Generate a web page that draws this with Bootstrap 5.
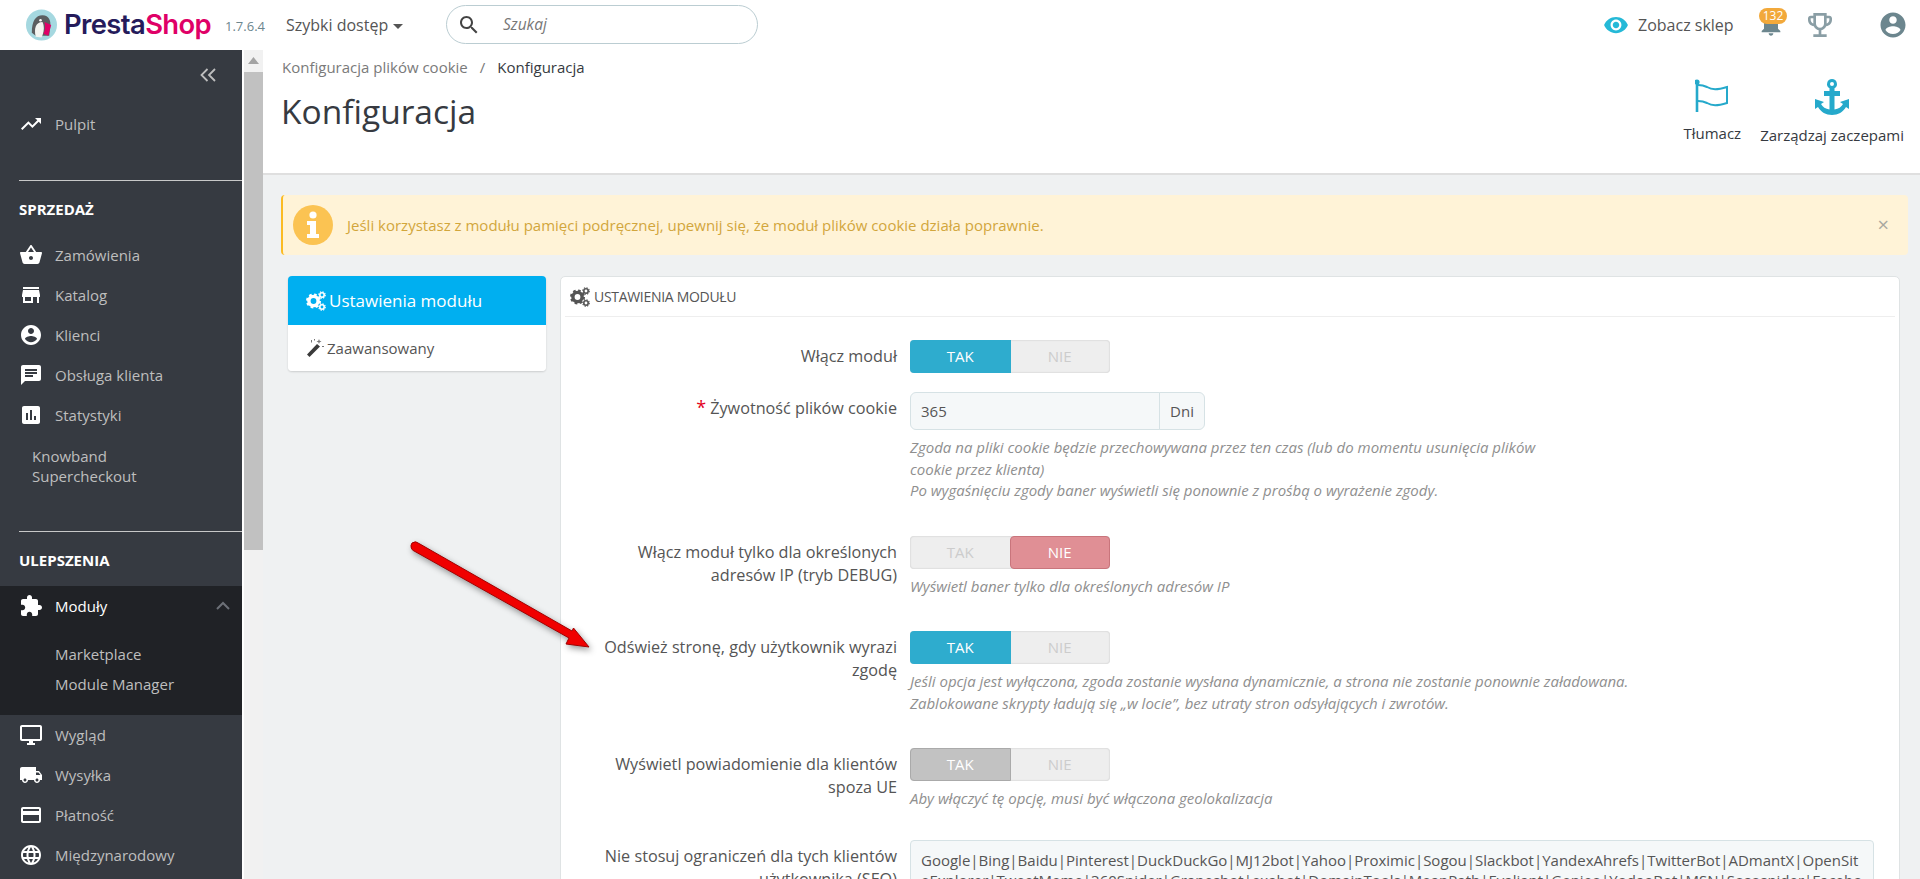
<!DOCTYPE html>
<html lang="pl">
<head>
<meta charset="utf-8">
<title>Konfiguracja</title>
<link href="https://cdn.jsdelivr.net/npm/bootstrap@5.3.0/dist/css/bootstrap.min.css" rel="stylesheet">
<style>
html,body{height:879px;overflow:hidden}
body{font-family:"Open Sans",sans-serif;font-size:15px;color:#555;background:#eff1f2}
svg{fill:currentColor;display:block;flex:none}
.top-bar{height:50px;background:#fff;padding:0;flex-wrap:nowrap}
.logo-mark{margin-left:26px;width:31px;height:32px}
.logo-word{font-family:Inter,sans-serif;font-weight:600;font-size:27.4px;letter-spacing:-.6px;color:#251b5b;margin-left:7px;line-height:1;width:147px;white-space:nowrap}
.logo-word span{color:#df0067}
.ver{font-size:13px;color:#6c868e;margin-left:14px;margin-top:4px;width:39px;white-space:nowrap}
.quick{font-size:16px;color:#555;margin-left:22px;width:122px;white-space:nowrap}
.quick i{display:inline-block;border:5px solid transparent;border-top-color:#555;border-bottom:0;margin-left:5px;vertical-align:2px}
.search-pill{margin-left:38px;margin-top:-1px;width:312px;height:39px;border:1px solid #bbcdd2;border-radius:20px;color:#444}
.search-pill svg{margin-left:10px}
.search-pill span{font-style:italic;color:#777;margin-left:22px;font-size:15.5px}
.top-right{margin-left:auto;height:50px}
.eye{color:#25b9d7}
.view-shop{font-size:16px;color:#555;margin-left:9px;width:124px;white-space:nowrap}
.bell-box{width:42px;height:50px;color:#6c868e}
.bell-svg{left:-5px;top:10px}
.bell-badge{left:-3px;top:8px;width:28px;height:16px;border-radius:8px;background:#f2a93b;color:#fff;font-size:12px;line-height:16px;text-align:center}
.trophy{color:#8a9ea5;margin-right:42px}
.avatar{color:#6c868e;margin-right:12px}
.side-nav{width:242px;background:#363a41;height:829px;flex:none}
.toggle-row{height:54px;color:#bebebe;padding:0 26px 0 0}
.side-link{height:40px;padding-left:19px;color:#bebebe;text-decoration:none;font-size:15px}
.side-link svg{color:#fff;width:24px;height:24px;margin-right:12px}
.side-link.plain{height:auto;padding:11px 40px 0 32px;line-height:20px;display:block}
.side-rule{margin:0 0 0 19px;border:0;border-top:1px solid #c8c8c8;opacity:1;height:0}
.rule-a{margin-top:36px}
.rule-b{margin-top:45px}
.side-head{height:46px;padding-left:19px;margin-top:5px;margin-bottom:3px;color:#fff;font-weight:700;font-size:15px;text-transform:uppercase}
.side-open{background:#202226;height:129px}
.side-open .side-link{color:#fff}
.side-sub{display:flex;align-items:center;height:30px;padding-left:55px;color:#bebebe;text-decoration:none}
.sub-list{padding:13px 0 16px}
.scroll-track{width:21px;background:#f1f1f1;flex:none;border-left:2px solid #fff}
.scroll-up{height:22px;color:#a3a3a3;padding-top:7px}
.scroll-thumb{height:478px;background:#c1c1c1}
.page-area{min-width:0}
.page-head{height:125px;background:#fff;border-bottom:2px solid #dfdfdf;padding:0 16px 0 19px}
.crumbs{margin:0;padding-top:7px;font-size:15px;line-height:20px;--bs-breadcrumb-divider-color:#777;--bs-breadcrumb-item-padding-x:12px}
.crumbs a{color:#7a7a7a;text-decoration:none}
.crumbs .active{color:#363a41}
.page-title{font-size:33.5px;font-weight:400;color:#363a41;margin:12px 0 0 -1px;line-height:44px}
.tool-btn{color:#363a41;font-size:15px;text-decoration:none;padding-top:29px;white-space:nowrap}
.tool-btn svg{color:#25a9cb;margin:0 auto 9px}
.tool-one{margin-right:19px}
.note-box{margin:20px 12px 0 18px;height:60px;padding:0 19px 0 10px;background:#fff3d7;border:0;border-left:2px solid #fbbb22;border-radius:4px;color:#d2a63c;font-size:15px}
.note-ico{width:40px;height:40px;background:#fbc352;border-radius:50%;color:#fff;margin-right:14px}
.note-close{margin-left:auto;color:#a8a8a0;font-size:20px;line-height:1}
.work-row{margin:21px 0 0 25px}
.tab-col{width:258px;flex:none;margin-right:14px}
.tab-list{border-radius:4px;box-shadow:0 1px 2px rgba(0,0,0,.15)}
.tab-list .list-group-item{border:0;padding:0 18px;display:flex;align-items:center;color:#555;font-size:15px}
.tab-list .list-group-item.active{background:#00aff0;color:#fff;height:49px;font-size:17px;white-space:nowrap}
.tab-list .list-group-item.second{height:46px}
.tab-list svg{margin-right:3px}
.mod-panel{width:1340px;border:1px solid #dfe3e4;border-radius:5px;background:#fff;height:700px}
.mod-head{margin:0 4px;height:40px;background:#fff;border-bottom:1px solid #eee;padding:0 5px;font-size:14px;letter-spacing:-.3px;color:#555;border-radius:0;text-transform:uppercase}
.mod-head svg{margin-right:4px}
.mod-body{padding:23px 0 0 36px}
.set-row{display:flex;margin-bottom:34px}
.set-row.tight{margin-bottom:19px}
.set-row.before-seo{margin-bottom:30px}
.set-label{width:300px;flex:none;margin-right:13px;text-align:right;line-height:23px;padding-top:5px;color:#555;font-size:16.2px}
.set-label b{color:#e3001b;font-weight:400;font-size:18px;line-height:0}
.set-ctl{min-width:0}
.flip{width:200px;height:33px;border-radius:4px;background:#eee;box-shadow:inset 0 0 2px rgba(0,0,0,.2)}
.flip .btn{width:100px;padding:0;height:33px;border:0;border-radius:0;font-size:15px;color:#ccc;line-height:33px;background:transparent}
.flip .btn.on-blue{background:#2eacce;color:#fff;border-radius:4px}
.flip .btn.on-red{background:#e08f95;color:#fff;border:1px solid #c9757c;border-radius:4px;line-height:31px}
.flip .btn.on-gray{background:#c2c2c2;color:#fff;border:1px solid #aaa;border-radius:4px;line-height:31px}
.days{width:295px;height:38px}
.days .form-control{background:#f5f8f9;border-color:#d6e2e5;color:#555;font-size:15px;padding:0 10px;height:38px;box-shadow:none}
.days .input-group-text{background:#f5f8f9;border-color:#d6e2e5;color:#555;font-size:15px;padding:0;width:46px;justify-content:center}
.hint{width:660px;font-style:italic;color:#8f8f8f;font-size:15px;line-height:21.5px;margin:7px 0 0}
.hint.wide{width:840px}
.seo-box.form-control{width:964px;height:120px;background:#f5f8f9;border-color:#d6e2e5;color:#555;font-size:15px;line-height:20px;padding:9px 10px;word-break:break-all;overflow:hidden;resize:none;box-shadow:none;border-radius:4px}
.pointer-arrow{position:absolute;left:405px;top:535px;filter:drop-shadow(2px 3px 3px rgba(0,0,0,.4));z-index:5}
</style>
</head>
<body class="position-relative">
<svg width="0" height="0" class="position-absolute">
<symbol id="gears" viewBox="0 0 20 20"><circle cx="7.5" cy="10" r="4.6" fill="none" stroke="currentColor" stroke-width="3.4"/><circle cx="7.5" cy="10" r="6.4" fill="none" stroke="currentColor" stroke-width="2.2" stroke-dasharray="2.6 2.4"/><circle cx="16" cy="4" r="2.2" fill="none" stroke="currentColor" stroke-width="1.6"/><circle cx="16" cy="16" r="2.2" fill="none" stroke="currentColor" stroke-width="1.6"/><circle cx="16" cy="4" r="3.3" fill="none" stroke="currentColor" stroke-width="1.1" stroke-dasharray="1.3 1.3"/><circle cx="16" cy="16" r="3.3" fill="none" stroke="currentColor" stroke-width="1.1" stroke-dasharray="1.3 1.3"/></symbol>
</svg>

<nav class="navbar top-bar">
  <svg class="logo-mark" viewBox="0 0 32 32"><circle cx="16" cy="16" r="16" fill="#a5d8e0"/><path d="M6 24C6 12 10 6 17 6s9 6 8 12l-1 9H10z" fill="#5b5e60"/><path d="M10 28c-2-8 0-15 7-15 2 4 2 10-1 16z" fill="#f4f4f0"/><path d="M19 13l7 3-3 11-5-2c2-4 2-8 1-12z" fill="#df0067"/><circle cx="15" cy="11" r="1.3" fill="#fff"/></svg>
  <span class="logo-word">Presta<span>Shop</span></span>
  <span class="ver">1.7.6.4</span>
  <span class="quick">Szybki dostęp<i></i></span>
  <div class="search-pill d-flex align-items-center">
    <svg width="24" height="24" viewBox="0 0 24 24"><path d="M15.5 14h-.79l-.28-.27C15.41 12.59 16 11.11 16 9.5 16 5.91 13.09 3 9.5 3S3 5.91 3 9.5 5.91 16 9.5 16c1.61 0 3.09-.59 4.23-1.57l.27.28v.79l5 4.99L20.49 19l-4.99-5zm-6 0C7.01 14 5 11.99 5 9.5S7.01 5 9.5 5 14 7.01 14 9.5 11.99 14 9.5 14z"/></svg>
    <span>Szukaj</span>
  </div>
  <div class="top-right d-flex align-items-center">
    <svg class="eye" width="26" height="26" viewBox="0 0 24 24"><path d="M12 4.5C7 4.5 2.73 7.61 1 12c1.73 4.39 6 7.5 11 7.5s9.27-3.11 11-7.5c-1.73-4.39-6-7.5-11-7.5zM12 17c-2.76 0-5-2.24-5-5s2.24-5 5-5 5 2.24 5 5-2.24 5-5 5zm0-8c-1.66 0-3 1.34-3 3s1.34 3 3 3 3-1.34 3-3-1.34-3-3-3z"/></svg>
    <span class="view-shop">Zobacz sklep</span>
    <div class="bell-box position-relative">
      <svg class="bell-svg position-absolute" width="28" height="28" viewBox="0 0 24 24"><path d="M12 22c1.1 0 2-.9 2-2h-4c0 1.1.9 2 2 2zm6-6v-5c0-3.07-1.63-5.64-4.5-6.32V4c0-.83-.67-1.5-1.5-1.5s-1.5.67-1.5 1.5v.68C7.64 5.36 6 7.92 6 11v5l-2 2v1h16v-1l-2-2z"/></svg>
      <span class="bell-badge position-absolute">132</span>
    </div>
    <svg class="trophy" width="32" height="32" viewBox="0 0 24 24"><path d="M19 5h-2V3H7v2H5c-1.1 0-2 .9-2 2v1c0 2.55 1.92 4.63 4.39 4.94.63 1.5 1.98 2.63 3.61 2.96V19H7v2h10v-2h-4v-3.1c1.63-.33 2.98-1.46 3.61-2.96C19.08 12.63 21 10.55 21 8V7c0-1.1-.9-2-2-2zM5 8V7h2v3.82C5.84 10.4 5 9.3 5 8zm7 6c-1.65 0-3-1.35-3-3V5h6v6c0 1.65-1.35 3-3 3zm7-6c0 1.3-.84 2.4-2 2.82V7h2v1z"/></svg>
    <svg class="avatar" width="30" height="30" viewBox="0 0 24 24"><path d="M12 2C6.48 2 2 6.48 2 12s4.48 10 10 10 10-4.48 10-10S17.52 2 12 2zm0 3c1.66 0 3 1.34 3 3s-1.34 3-3 3-3-1.34-3-3 1.34-3 3-3zm0 14.2c-2.5 0-4.71-1.28-6-3.22.03-1.99 4-3.08 6-3.08 1.99 0 5.97 1.09 6 3.08-1.29 1.94-3.5 3.22-6 3.22z"/></svg>
  </div>
</nav>

<div class="d-flex">
  <aside class="side-nav overflow-hidden">
    <div class="toggle-row d-flex align-items-center justify-content-end">
      <svg width="16" height="14" viewBox="0 0 16 14" style="fill:none;stroke:currentColor;stroke-width:1.8;margin-top:-4px"><path d="M7.500 1L1.500 7l6 6M15 1L9 7l6 6"/></svg>
    </div>
    <a class="side-link d-flex align-items-center" href="#"><svg viewBox="0 0 24 24"><path d="M16 6l2.29 2.29-4.88 4.88-4-4L2 16.59 3.41 18l6-6 4 4 6.3-6.29L22 12V6z"/></svg>Pulpit</a>
    <hr class="side-rule rule-a">
    <div class="side-head d-flex align-items-center">Sprzedaż</div>
    <a class="side-link d-flex align-items-center" href="#"><svg viewBox="0 0 24 24"><path d="M17.21 9l-4.38-6.56c-.19-.28-.51-.42-.83-.42-.32 0-.64.14-.83.43L6.79 9H2c-.55 0-1 .45-1 1 0 .09.01.18.04.27l2.54 9.27c.23.84 1 1.46 1.92 1.46h13c.92 0 1.69-.62 1.93-1.46l2.54-9.27L23 10c0-.55-.45-1-1-1h-4.79zM9 9l3-4.4L15 9H9zm3 8c-1.1 0-2-.9-2-2s.9-2 2-2 2 .9 2 2-.9 2-2 2z"/></svg>Zamówienia</a>
    <a class="side-link d-flex align-items-center" href="#"><svg viewBox="0 0 24 24"><path d="M20 4H4v2h16V4zm1 10v-2l-1-5H4l-1 5v2h1v6h10v-6h4v6h2v-6h1zm-9 4H6v-4h6v4z"/></svg>Katalog</a>
    <a class="side-link d-flex align-items-center" href="#"><svg viewBox="0 0 24 24"><path d="M12 2C6.48 2 2 6.48 2 12s4.48 10 10 10 10-4.48 10-10S17.52 2 12 2zm0 3c1.66 0 3 1.34 3 3s-1.34 3-3 3-3-1.34-3-3 1.34-3 3-3zm0 14.2c-2.5 0-4.71-1.28-6-3.22.03-1.99 4-3.08 6-3.08 1.99 0 5.97 1.09 6 3.08-1.29 1.94-3.5 3.22-6 3.22z"/></svg>Klienci</a>
    <a class="side-link d-flex align-items-center" href="#"><svg viewBox="0 0 24 24"><path d="M20 2H4c-1.1 0-1.99.9-1.99 2L2 22l4-4h14c1.1 0 2-.9 2-2V4c0-1.1-.9-2-2-2zM6 9h12v2H6V9zm8 5H6v-2h8v2zm4-6H6V6h12v2z"/></svg>Obsługa klienta</a>
    <a class="side-link d-flex align-items-center" href="#"><svg viewBox="0 0 24 24"><path d="M19 3H5c-1.1 0-2 .9-2 2v14c0 1.1.9 2 2 2h14c1.1 0 2-.9 2-2V5c0-1.1-.9-2-2-2zM9 17H7v-7h2v7zm4 0h-2V7h2v10zm4 0h-2v-4h2v4z"/></svg>Statystyki</a>
    <a class="side-link plain" href="#">Knowband Supercheckout</a>
    <hr class="side-rule rule-b">
    <div class="side-head d-flex align-items-center">Ulepszenia</div>
    <div class="side-open">
      <a class="side-link d-flex align-items-center" href="#"><svg viewBox="0 0 24 24"><path d="M20.5 11H19V7c0-1.1-.9-2-2-2h-4V3.5C13 2.12 11.88 1 10.5 1S8 2.12 8 3.5V5H4c-1.1 0-1.99.9-1.99 2v3.8H3.5c1.49 0 2.7 1.21 2.7 2.7s-1.21 2.7-2.7 2.7H2V20c0 1.1.9 2 2 2h3.8v-1.5c0-1.49 1.21-2.7 2.7-2.7 1.49 0 2.7 1.21 2.7 2.7V22H17c1.1 0 2-.9 2-2v-4h1.5c1.38 0 2.5-1.12 2.5-2.5S21.88 11 20.5 11z"/></svg>Moduły
        <svg class="ms-auto" style="color:#6c7077;width:14px;height:10px;margin-right:12px;fill:none;stroke:currentColor;stroke-width:2" viewBox="0 0 14 10"><path d="M1 8l6-6 6 6"/></svg></a>
      <div class="sub-list">
        <a class="side-sub" href="#">Marketplace</a>
        <a class="side-sub" href="#">Module Manager</a>
      </div>
    </div>
    <a class="side-link d-flex align-items-center" href="#"><svg viewBox="0 0 24 24"><path d="M21 2H3c-1.1 0-2 .9-2 2v12c0 1.1.9 2 2 2h7v2H8v2h8v-2h-2v-2h7c1.1 0 2-.9 2-2V4c0-1.1-.9-2-2-2zm0 14H3V4h18v12z"/></svg>Wygląd</a>
    <a class="side-link d-flex align-items-center" href="#"><svg viewBox="0 0 24 24"><path d="M20 8h-3V4H3c-1.1 0-2 .9-2 2v11h2c0 1.66 1.34 3 3 3s3-1.34 3-3h6c0 1.66 1.34 3 3 3s3-1.34 3-3h2v-5l-3-4zM6 18.5c-.83 0-1.5-.67-1.5-1.5s.67-1.5 1.5-1.5 1.5.67 1.5 1.5-.67 1.5-1.5 1.5zm13.5-9l1.96 2.5H17V9.5h2.5zm-1.5 9c-.83 0-1.5-.67-1.5-1.5s.67-1.5 1.5-1.5 1.5.67 1.5 1.5-.67 1.5-1.5 1.5z"/></svg>Wysyłka</a>
    <a class="side-link d-flex align-items-center" href="#"><svg viewBox="0 0 24 24"><path d="M20 4H4c-1.11 0-1.99.89-1.99 2L2 18c0 1.11.89 2 2 2h16c1.11 0 2-.89 2-2V6c0-1.11-.89-2-2-2zm0 14H4v-6h16v6zm0-10H4V6h16v2z"/></svg>Płatność</a>
    <a class="side-link d-flex align-items-center" href="#"><svg viewBox="0 0 24 24"><path d="M11.99 2C6.47 2 2 6.48 2 12s4.47 10 9.99 10C17.52 22 22 17.52 22 12S17.52 2 11.99 2zm6.93 6h-2.95c-.32-1.25-.78-2.45-1.38-3.56 1.84.63 3.37 1.91 4.33 3.56zM12 4.04c.83 1.2 1.48 2.53 1.91 3.96h-3.82c.43-1.43 1.08-2.76 1.91-3.96zM4.26 14C4.1 13.36 4 12.69 4 12s.1-1.36.26-2h3.38c-.08.66-.14 1.32-.14 2 0 .68.06 1.34.14 2H4.26zm.82 2h2.95c.32 1.25.78 2.45 1.38 3.56-1.84-.63-3.37-1.9-4.33-3.56zm2.95-8H5.08c.96-1.66 2.49-2.93 4.33-3.56C8.81 5.55 8.35 6.75 8.03 8zM12 19.96c-.83-1.2-1.48-2.53-1.91-3.96h3.82c-.43 1.43-1.08 2.76-1.91 3.96zM14.34 14H9.66c-.09-.66-.16-1.32-.16-2 0-.68.07-1.35.16-2h4.68c.09.65.16 1.32.16 2 0 .68-.07 1.34-.16 2zm.25 5.56c.6-1.11 1.06-2.31 1.38-3.56h2.95c-.96 1.65-2.49 2.93-4.33 3.56zM16.36 14c.08-.66.14-1.32.14-2 0-.68-.06-1.34-.14-2h3.38c.16.64.26 1.31.26 2s-.1 1.36-.26 2h-3.38z"/></svg>Międzynarodowy</a>
  </aside>

  <div class="scroll-track">
    <div class="scroll-up d-flex justify-content-center"><svg width="11" height="7" viewBox="0 0 11 7"><path d="M5.5 0L11 7H0z"/></svg></div>
    <div class="scroll-thumb"></div>
  </div>

  <main class="page-area flex-grow-1">
    <header class="page-head d-flex justify-content-between">
      <div>
        <nav aria-label="breadcrumb">
          <ol class="breadcrumb crumbs">
            <li class="breadcrumb-item"><a href="#">Konfiguracja plików cookie</a></li>
            <li class="breadcrumb-item active">Konfiguracja</li>
          </ol>
        </nav>
        <h1 class="page-title">Konfiguracja</h1>
      </div>
      <div class="d-flex align-items-start">
        <a class="tool-btn tool-one text-center" href="#">
          <svg width="34" height="34" viewBox="0 0 34 34" style="fill:none;stroke:currentColor;stroke-width:2"><path d="M2 4v29" stroke-width="2.6"/><circle cx="2" cy="3" r="1.6" fill="currentColor"/><path d="M3 6c2 0 5 0 9 2 5 3 10 3 20 0v16c-10 3-15 3-20 0-4-2-7-2-9-2"/></svg>
          Tłumacz
        </a>
        <a class="tool-btn text-center" href="#">
          <svg width="36" height="36" viewBox="0 0 36 36"><path d="M18 0a5 5 0 0 1 2.5 9.3V12H26v5h-5.500v13.500c4-.6 6.800-2.500 8.500-5.500l-3-2 9-3v10l-3-2c-2.800 5-8 8-14 8s-11.200-3-14-8l-3 2V20l9 3-3 2c1.700 3 4.500 4.900 8.500 5.500V17H10v-5h5.500V9.300A5 5 0 0 1 18 0zm0 3a2 2 0 1 0 0 4 2 2 0 0 0 0-4z"/></svg>
          Zarządzaj zaczepami
        </a>
      </div>
    </header>

    <div class="alert note-box d-flex align-items-center" role="alert">
      <span class="note-ico d-flex align-items-center justify-content-center flex-none">
        <svg width="14" height="28" viewBox="0 0 14 28"><circle cx="7" cy="4" r="3.600"/><path d="M1 10h9v13h3v4H1v-4h3v-9H1z"/></svg>
      </span>
      <span>Jeśli korzystasz z modułu pamięci podręcznej, upewnij się, że moduł plików cookie działa poprawnie.</span>
      <span class="note-close">×</span>
    </div>

    <div class="work-row d-flex align-items-start">
      <div class="tab-col">
        <div class="list-group tab-list">
          <a class="list-group-item active" href="#"><svg width="20" height="20"><use href="#gears"/></svg>Ustawienia modułu</a>
          <a class="list-group-item second" href="#"><svg width="18" height="18" viewBox="0 0 18 18"><path d="M1 15.500L11 5l3 2.500L3.500 18z" fill="#3a3a3a"/><path d="M13 0l.7 1.800 1.800.7-1.800.7L13 5l-.7-1.800-1.800-.7 1.800-.7zM5 1h1v2.500H5zM16 7h2v1h-2zM8 0h1v1.500H8z" fill="#777"/></svg>Zaawansowany</a>
        </div>
      </div>
      <section class="mod-panel">
        <div class="mod-head d-flex align-items-center"><svg width="20" height="20"><use href="#gears"/></svg>Ustawienia modułu</div>
        <div class="mod-body">
          <div class="set-row tight">
            <div class="set-label">Włącz moduł</div>
            <div class="set-ctl"><div class="btn-group flip"><span class="btn on-blue">TAK</span><span class="btn">NIE</span></div></div>
          </div>
          <div class="set-row">
            <div class="set-label"><b>*</b> Żywotność plików cookie</div>
            <div class="set-ctl">
              <div class="input-group days"><input class="form-control" value="365"><span class="input-group-text">Dni</span></div>
              <p class="hint">Zgoda na pliki cookie będzie przechowywana przez ten czas (lub do momentu usunięcia plików cookie przez klienta)<br>Po wygaśnięciu zgody baner wyświetli się ponownie z prośbą o wyrażenie zgody.</p>
            </div>
          </div>
          <div class="set-row">
            <div class="set-label">Włącz moduł tylko dla określonych adresów IP (tryb DEBUG)</div>
            <div class="set-ctl">
              <div class="btn-group flip"><span class="btn">TAK</span><span class="btn on-red">NIE</span></div>
              <p class="hint">Wyświetl baner tylko dla określonych adresów IP</p>
            </div>
          </div>
          <div class="set-row">
            <div class="set-label">Odśwież stronę, gdy użytkownik wyrazi zgodę</div>
            <div class="set-ctl">
              <div class="btn-group flip"><span class="btn on-blue">TAK</span><span class="btn">NIE</span></div>
              <p class="hint wide">Jeśli opcja jest wyłączona, zgoda zostanie wysłana dynamicznie, a strona nie zostanie ponownie załadowana.<br>Zablokowane skrypty ładują się „w locie”, bez utraty stron odsyłających i zwrotów.</p>
            </div>
          </div>
          <div class="set-row before-seo">
            <div class="set-label">Wyświetl powiadomienie dla klientów spoza UE</div>
            <div class="set-ctl">
              <div class="btn-group flip"><span class="btn on-gray">TAK</span><span class="btn">NIE</span></div>
              <p class="hint">Aby włączyć tę opcję, musi być włączona geolokalizacja</p>
            </div>
          </div>
          <div class="set-row">
            <div class="set-label">Nie stosuj ograniczeń dla tych klientów użytkownika (SEO)</div>
            <div class="set-ctl">
              <textarea class="form-control seo-box" readonly>Google|Bing|Baidu|Pinterest|DuckDuckGo|MJ12bot|Yahoo|Proximic|Sogou|Slackbot|YandexAhrefs|TwitterBot|ADmantX|OpenSiteExplorer|TweetMeme|360Spider|Grapeshot|exabot|DomainTools|MeanPath|Evaliant|Genieo|YodaoBot|MSN|Sosospider|Facebook</textarea>
            </div>
          </div>
        </div>
      </section>
    </div>
  </main>
</div>

<svg class="pointer-arrow" width="200" height="125" viewBox="0 0 200 125"><path d="M7 8a5.500 5.500 0 0 1 7 .5L167 96l1.500-3L184 112l-23-3 3-6L10 16.500A5.500 5.500 0 0 1 7 8z" fill="#f00000" stroke="#a00000" stroke-width="1"/></svg>
</body>
</html>
